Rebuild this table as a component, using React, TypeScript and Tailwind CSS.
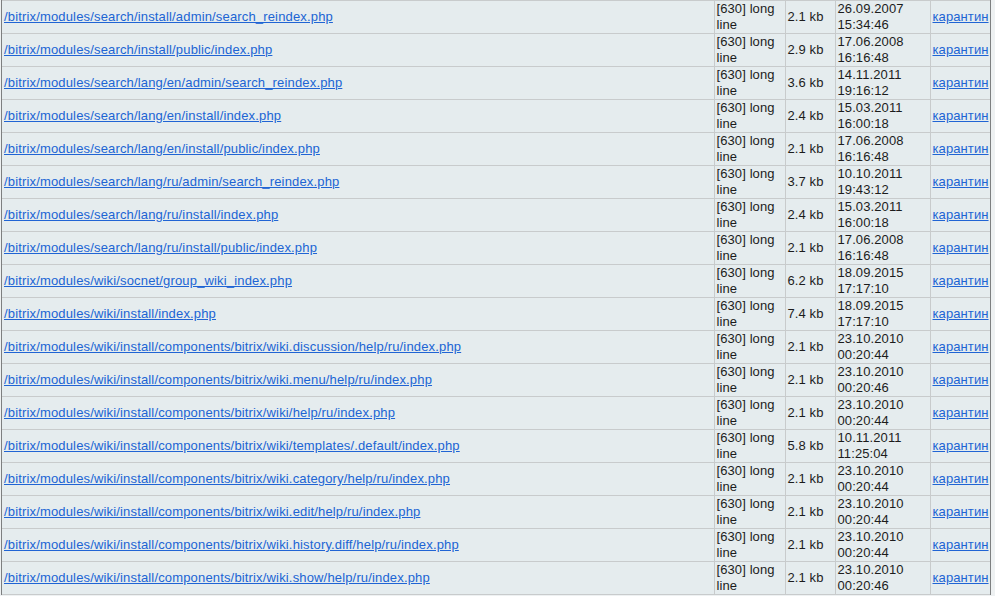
const BASE = '/bitrix/modules/wiki/install/components/bitrix/';

interface FileRow {
  path: string;
  size: string;
  date: string;
  time: string;
}

const ROWS: FileRow[] = [
  { path: '/bitrix/modules/search/install/admin/search_reindex.php', size: '2.1 kb', date: '26.09.2007', time: '15:34:46' },
  { path: '/bitrix/modules/search/install/public/index.php', size: '2.9 kb', date: '17.06.2008', time: '16:16:48' },
  { path: '/bitrix/modules/search/lang/en/admin/search_reindex.php', size: '3.6 kb', date: '14.11.2011', time: '19:16:12' },
  { path: '/bitrix/modules/search/lang/en/install/index.php', size: '2.4 kb', date: '15.03.2011', time: '16:00:18' },
  { path: '/bitrix/modules/search/lang/en/install/public/index.php', size: '2.1 kb', date: '17.06.2008', time: '16:16:48' },
  { path: '/bitrix/modules/search/lang/ru/admin/search_reindex.php', size: '3.7 kb', date: '10.10.2011', time: '19:43:12' },
  { path: '/bitrix/modules/search/lang/ru/install/index.php', size: '2.4 kb', date: '15.03.2011', time: '16:00:18' },
  { path: '/bitrix/modules/search/lang/ru/install/public/index.php', size: '2.1 kb', date: '17.06.2008', time: '16:16:48' },
  { path: '/bitrix/modules/wiki/socnet/group_wiki_index.php', size: '6.2 kb', date: '18.09.2015', time: '17:17:10' },
  { path: '/bitrix/modules/wiki/install/index.php', size: '7.4 kb', date: '18.09.2015', time: '17:17:10' },
  { path: BASE + 'wiki.discussion/help/ru/index.php', size: '2.1 kb', date: '23.10.2010', time: '00:20:44' },
  { path: BASE + 'wiki.menu/help/ru/index.php', size: '2.1 kb', date: '23.10.2010', time: '00:20:46' },
  { path: BASE + 'wiki/help/ru/index.php', size: '2.1 kb', date: '23.10.2010', time: '00:20:44' },
  { path: BASE + 'wiki/templates/.default/index.php', size: '5.8 kb', date: '10.11.2011', time: '11:25:04' },
  { path: BASE + 'wiki.category/help/ru/index.php', size: '2.1 kb', date: '23.10.2010', time: '00:20:44' },
  { path: BASE + 'wiki.edit/help/ru/index.php', size: '2.1 kb', date: '23.10.2010', time: '00:20:44' },
  { path: BASE + 'wiki.history.diff/help/ru/index.php', size: '2.1 kb', date: '23.10.2010', time: '00:20:44' },
  { path: BASE + 'wiki.show/help/ru/index.php', size: '2.1 kb', date: '23.10.2010', time: '00:20:46' },
];

const cell = 'border-b border-r border-[#c8cbcc] px-[2px] py-0 align-middle';

export default function App() {
  return (
    <div className="h-[596px] w-[995px] overflow-hidden bg-[#eef1f2] pl-px font-['Liberation_Sans',Arial,sans-serif] text-[13px] leading-4 text-[#1c1c1c]">
      <div className="w-[990px] border-x border-[#7d7f80] bg-[#e5ecee]">
        <table className="w-full table-fixed border-collapse">
          <colgroup>
            <col className="w-[712px]" />
            <col className="w-[71px]" />
            <col className="w-[50px]" />
            <col className="w-[95px]" />
            <col />
          </colgroup>
          <tbody>
            {ROWS.map((r, i) => (
              <tr key={i} className={i === 0 ? 'h-[33px] border-t border-[#c8cbcc]' : 'h-[33px]'}>
                <td className={cell + ' whitespace-nowrap'}>
                  <a href="#" className="tracking-[0.16px] text-[#2064d4] underline">
                    {r.path}
                  </a>
                </td>
                <td className={cell + ' tracking-[0.1px]'}>
                  [630] long
                  <br />
                  line
                </td>
                <td className={cell + ' tracking-[0.1px]'}>{r.size}</td>
                <td className={cell + ' tracking-[0.1px]'}>
                  {r.date}
                  <br />
                  {r.time}
                </td>
                <td className="border-b border-[#c8cbcc] px-[2px] align-middle">
                  <a href="#" className="tracking-[0.1px] text-[#2064d4] underline">
                    карантин
                  </a>
                </td>
              </tr>
            ))}
          </tbody>
        </table>
      </div>
    </div>
  );
}
